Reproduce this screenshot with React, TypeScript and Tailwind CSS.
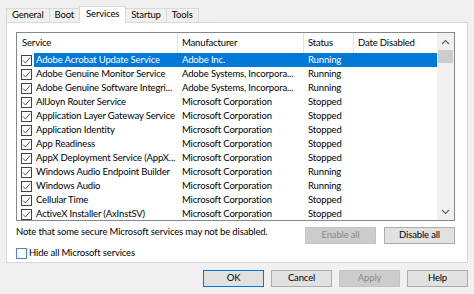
import React from "react";

const rows: [string, string, string][] = [
  ["Adobe Acrobat Update Service", "Adobe Inc.", "Running"],
  ["Adobe Genuine Monitor Service", "Adobe Systems, Incorpora...", "Running"],
  ["Adobe Genuine Software Integri...", "Adobe Systems, Incorpora...", "Running"],
  ["AllJoyn Router Service", "Microsoft Corporation", "Stopped"],
  ["Application Layer Gateway Service", "Microsoft Corporation", "Stopped"],
  ["Application Identity", "Microsoft Corporation", "Stopped"],
  ["App Readiness", "Microsoft Corporation", "Stopped"],
  ["AppX Deployment Service (AppX...", "Microsoft Corporation", "Stopped"],
  ["Windows Audio Endpoint Builder", "Microsoft Corporation", "Running"],
  ["Windows Audio", "Microsoft Corporation", "Running"],
  ["Cellular Time", "Microsoft Corporation", "Stopped"],
  ["ActiveX Installer (AxInstSV)", "Microsoft Corporation", "Stopped"],
];

function Check({ checked }: { checked: boolean }) {
  return (
    <div className={`w-[11px] h-[11px] bg-white border ${checked ? "border-[#444444]" : "border-[#4a86c5]"} flex items-center justify-center shrink-0`}>
      {checked && (
        <svg width="9" height="9" viewBox="0 0 9 9">
          <path d="M1 4.5 L3.5 7 L8 1.5" fill="none" stroke="#444" strokeWidth="0.9" />
        </svg>
      )}
    </div>
  );
}

function Btn({ label, disabled, primary, w = "w-[61px]" }: { label: string; disabled?: boolean; primary?: boolean; w?: string }) {
  return (
    <div
      className={`${w} h-[17px] flex items-center justify-center border ${
        disabled
          ? "bg-[#cccccc] border-[#c4c4c4] text-[#8a8a8a]"
          : primary
          ? "bg-[#e1e1e1] border-[#0078d7] text-black"
          : "bg-[#e1e1e1] border-[#adadad] text-black"
      }`}
    >
      {label}
    </div>
  );
}

export default function App() {
  const tabs = ["General", "Boot", "Services", "Startup", "Tools"];
  return (
    <div
      className="w-[474px] h-[294px] bg-[#f0f0f0] overflow-hidden text-black flex flex-col text-[9.5px] tracking-[-0.15px]"
      style={{ fontFamily: 'Lato, "Liberation Sans", Arial, sans-serif' }}
    >
      <div className="flex items-end pl-[6px] pt-[5px] h-[22px]">
        {tabs.map((t) => {
          const sel = t === "Services";
          return (
            <div
              key={t}
              className={`border border-b-0 border-[#d9d9d9] -ml-px first:ml-0 ${
                sel ? "bg-white h-[17px] pb-[2px] px-[6px] relative z-10 -mb-px" : "bg-[#f0f0f0] h-[14px] px-[5px]"
              } flex items-center`}
            >
              {t}
            </div>
          );
        })}
      </div>
      <div className="mx-[6px] h-[241px] bg-white border border-[#d9d9d9] pl-[9px] pr-[12px] pt-[9px] flex flex-col">
        <div className="w-[439px] h-[189px] border border-[#828790] flex overflow-hidden">
          <div className="flex-1 flex flex-col overflow-hidden">
            <div className="h-[20px] flex shrink-0">
              <div className="w-[161px] pl-[5px] flex items-center border-r border-[#e5e5e5]">Service</div>
              <div className="w-[126px] pl-[4px] flex items-center border-r border-[#e5e5e5]">Manufacturer</div>
              <div className="w-[50px] pl-[4px] flex items-center border-r border-[#e5e5e5]">Status</div>
              <div className="flex-1 pl-[4px] flex items-center">Date Disabled</div>
            </div>
            {rows.map((r, i) => {
              const sel = i === 0;
              return (
                <div key={i} className="h-[14px] flex shrink-0 items-center">
                  <div className="w-[17px] flex justify-end pr-[2px]">
                    <Check checked />
                  </div>
                  <div className={`flex-1 flex h-full items-center ${sel ? "bg-[#0078d7] text-white" : ""}`}>
                    <div className="w-[144px] pl-[2px] whitespace-nowrap overflow-hidden">{r[0]}</div>
                    <div className="w-[126px] pl-[4px] whitespace-nowrap overflow-hidden">{r[1]}</div>
                    <div className="w-[50px] pl-[4px] whitespace-nowrap">{r[2]}</div>
                  </div>
                </div>
              );
            })}
          </div>
          <div className="w-[17px] bg-[#f0f0f0] flex flex-col items-center shrink-0">
            <div className="h-[17px] w-full flex items-center justify-center">
              <svg width="9" height="6" viewBox="0 0 9 6">
                <path d="M1 5 L4.5 1.5 L8 5" fill="none" stroke="#606060" strokeWidth="1.2" />
              </svg>
            </div>
            <div className="w-[15px] h-[13px] bg-[#cdcdcd]" />
            <div className="flex-1" />
            <div className="h-[17px] w-full flex items-center justify-center">
              <svg width="9" height="6" viewBox="0 0 9 6">
                <path d="M1 1 L4.5 4.5 L8 1" fill="none" stroke="#606060" strokeWidth="1.2" />
              </svg>
            </div>
          </div>
        </div>
        <div className="flex items-start justify-between mt-[6px]">
          <div className="whitespace-nowrap mt-[-2px]">Note that some secure Microsoft services may not be disabled.</div>
          <div className="flex gap-[8px]">
            <Btn label="Enable all" disabled w="w-[71px]" />
            <Btn label="Disable all" w="w-[71px]" />
          </div>
        </div>
        <div className="flex items-center gap-[2px] mt-[2px]">
          <Check checked={false} />
          <span>Hide all Microsoft services</span>
        </div>
      </div>
      <div className="flex justify-end gap-[7px] pr-[6px] mt-[7px]">
        <Btn label="OK" primary />
        <Btn label="Cancel" />
        <Btn label="Apply" disabled />
        <Btn label="Help" />
      </div>
    </div>
  );
}
